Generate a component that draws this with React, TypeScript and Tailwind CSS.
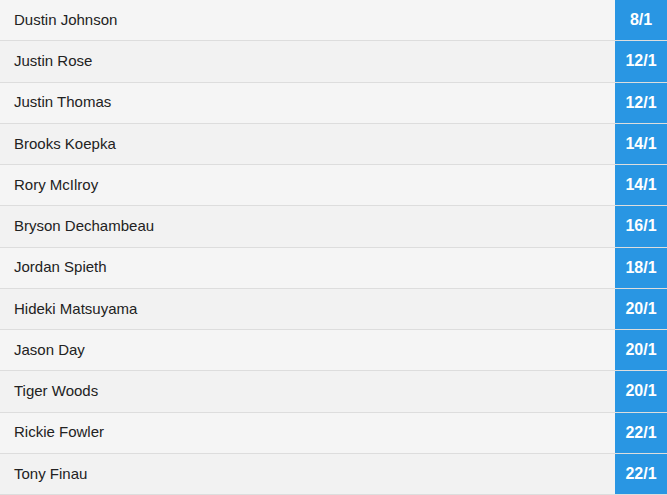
const players = [
    { name: 'Dustin Johnson', odds: '8/1' },
    { name: 'Justin Rose', odds: '12/1' },
    { name: 'Justin Thomas', odds: '12/1' },
    { name: 'Brooks Koepka', odds: '14/1' },
    { name: 'Rory McIlroy', odds: '14/1' },
    { name: 'Bryson Dechambeau', odds: '16/1' },
    { name: 'Jordan Spieth', odds: '18/1' },
    { name: 'Hideki Matsuyama', odds: '20/1' },
    { name: 'Jason Day', odds: '20/1' },
    { name: 'Tiger Woods', odds: '20/1' },
    { name: 'Rickie Fowler', odds: '22/1' },
    { name: 'Tony Finau', odds: '22/1' },
]

export default function App() {
    return (
        <div className="w-[667px] h-[495px] overflow-hidden bg-white font-['Liberation_Sans',Arial,sans-serif]">
            {players.map((p, index) => (
                <div
                    key={'player-' + index}
                    className={`flex h-[41.25px] border-b border-[#dddddd] ${index % 2 === 0 ? 'bg-[#f5f5f5]' : 'bg-[#f2f2f2]'}`}
                >
                    <div className="flex-1 flex items-center pl-[14px] text-[15px] text-[#222222]">
                        {p.name}
                    </div>
                    <div className="w-[52px] flex items-center justify-center bg-[#2996e3] text-white font-bold text-[16px]">
                        {p.odds}
                    </div>
                </div>
            ))}
        </div>
    )
}
